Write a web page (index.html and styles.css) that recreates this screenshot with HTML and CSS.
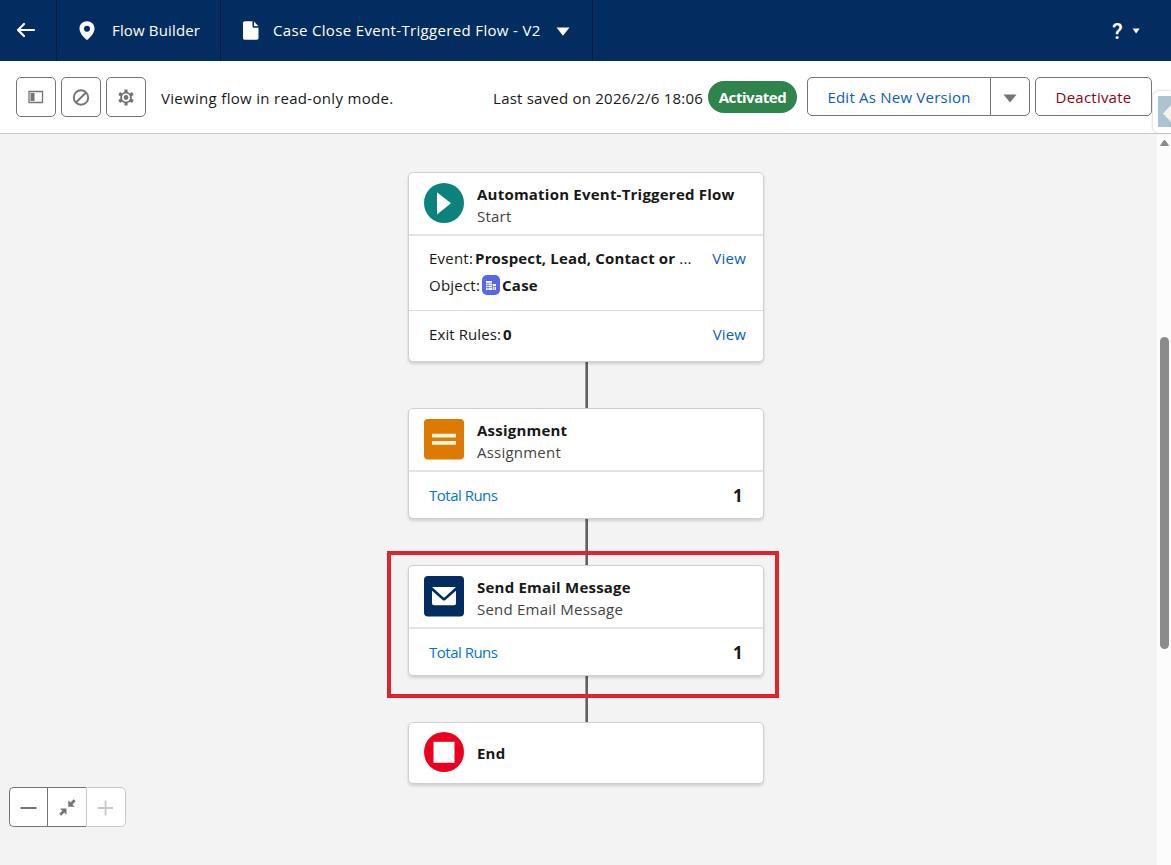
FILE: index.html
```html
<!DOCTYPE html>
<html lang="en">
<head>
<meta charset="utf-8">
<title>Flow Builder</title>
<link rel="stylesheet" href="styles.css">
</head>
<body>
<header class="topbar">
  <div class="back"><svg width="20" height="16" viewBox="0 0 20 16"><path d="M8 2 2 8l6 6M2.500 8H18" fill="none" stroke="#fff" stroke-width="2.200" stroke-linejoin="round" stroke-linecap="round"/></svg></div>
  <div class="app"><svg width="16" height="19" viewBox="0 0 16 19"><path fill="#fff" fill-rule="evenodd" d="M8 0.300C3.800 0.300.500 3.400.500 7.500c0 4.600 4.300 8.800 6.600 10.900.5.500 1.300.5 1.800 0 2.300-2.100 6.600-6.300 6.600-10.900C15.500 3.400 12.200.3 8 .3zM8 4.700a3 3 0 1 1 0 6 3 3 0 0 1 0-6z"/></svg><span>Flow Builder</span></div>
  <div class="flow-name"><svg width="17" height="19" viewBox="0 0 17 19"><path fill="#fff" d="M3 .3h7.500v4.900c0 .9.600 1.500 1.500 1.500h4.500V17c0 1-.7 1.700-1.700 1.700H2.700C1.700 18.700 1 18 1 17V2C1 1 1.700.3 3 .3zM12 .500 16.500 5.200h-4c-.3 0-.5-.2-.5-.5z"/></svg><span>Case Close Event-Triggered Flow - V2</span><svg class="caret" width="14" height="9" viewBox="0 0 14 9"><path fill="#fff" d="M.5.500h13L7 8.800z"/></svg></div>
  <div class="help"><span>?</span><svg width="8" height="6" viewBox="0 0 8 6"><path fill="#fff" d="M.5.500h7.200L4.100 5.500z"/></svg></div>
</header>
<div class="toolbar">
  <button class="icon-btn"><svg width="16" height="14" viewBox="0 0 16 14"><path d="M1 1.500h13.500v11H1z" fill="none" stroke="#747474" stroke-width="1.300"/><path d="M2.500 3h4v8h-4z" fill="#747474"/></svg></button>
  <button class="icon-btn"><svg width="18" height="18" viewBox="0 0 18 18"><circle cx="9" cy="9.500" r="7.200" fill="none" stroke="#747474" stroke-width="1.900"/><path d="m4 14.500 10-10" stroke="#747474" stroke-width="1.900"/></svg></button>
  <button class="icon-btn"><svg width="16" height="18" viewBox="0 0 16 18"><g stroke="#747474" stroke-width="3.200"><path d="M8 1.500v16M1.100 5.500l13.800 8M1.100 13.500 14.900 5.500"/></g><circle cx="8" cy="9.500" r="5.800" fill="#747474"/><circle cx="8" cy="9.500" r="3.200" fill="none" stroke="#fff" stroke-width="1.500"/></svg></button>
  <span class="readonly">Viewing flow in read-only mode.</span>
  <span class="saved">Last saved on 2026/2/6 18:06</span>
  <span class="badge">Activated</span>
  <div class="split"><button class="edit"><span>Edit As New Version</span></button><button class="more"><svg width="14" height="9" viewBox="0 0 14 9"><path fill="#747474" d="M.5.500h13L7 8.500z"/></svg></button></div>
  <button class="deactivate"><span>Deactivate</span></button>
  <div class="side-tab"><div class="side-tab-face"><svg width="13" height="31" viewBox="0 0 13 31"><path fill="#f3f3ef" d="M5 17.500 13 9v17z"/></svg></div></div>
</div>
<main class="workspace">
  <section class="canvas">
    <article class="card start">
      <div class="head"><svg width="40" height="40" viewBox="0 0 40 40"><circle cx="20" cy="20" r="20" fill="#0b827c"/><path d="M13 9.300 27 20.300 13 31.500z" fill="#fff"/></svg><div class="names"><b>Automation Event-Triggered Flow</b><span>Start</span></div></div>
      <div class="details">
        <div class="row"><span>Event:</span><b class="event">Prospect, Lead, Contact or <i>...</i></b><a>View</a></div>
        <div class="row"><span>Object:</span><svg class="obj" width="18" height="20" viewBox="0 0 18 20"><rect width="18" height="20" rx="5" fill="#5867e8"/><path fill="#fff" d="M4 6h6v3h4v6H4z"/><path stroke="#5867e8" stroke-width=".7" d="M4 8.200h6M4 10.400h6M4 12.600h6M6 8v7M10.500 9v6M10.500 11.500H14M12.300 11v4"/></svg><b>Case</b></div>
      </div>
      <div class="exit row"><span>Exit Rules:</span><b>0</b><a>View</a></div>
    </article>
    <div class="line"></div>
    <article class="card">
      <div class="head"><svg width="40" height="41" viewBox="0 0 40 41"><rect width="40" height="40.500" rx="4" fill="#dd7a01"/><path fill="#fff4dc" d="M8 14.800h24v3.700H8zM8 22h24v3.700H8z"/></svg><div class="names"><b>Assignment</b><span>Assignment</span></div></div>
      <div class="runs"><span>Total Runs</span><b>1</b></div>
    </article>
    <div class="line"></div>
    <article class="card email">
      <div class="head"><svg width="40" height="41" viewBox="0 0 40 41"><rect width="40" height="40.500" rx="4" fill="#032d60"/><path fill="#fff" d="M8 11h24L20.700 21.300c-.4.400-1 .4-1.400 0zM8 14.700l10.600 9.200c.8.700 2 .7 2.800 0L32 14.700v12.500c0 1.200-.8 2-2 2H10c-1.200 0-2-.8-2-2z"/></svg><div class="names"><b>Send Email Message</b><span>Send Email Message</span></div></div>
      <div class="runs"><span>Total Runs</span><b>1</b></div>
      <div class="highlight"></div>
    </article>
    <div class="line"></div>
    <article class="card end">
      <svg width="40" height="40" viewBox="0 0 40 40"><circle cx="20" cy="20" r="20" fill="#ea001e"/><path d="M9.500 9.800h21v21h-21z" fill="#fff"/></svg><b>End</b>
    </article>
    <div class="zoom">
      <button><svg width="17" height="17" viewBox="0 0 17 17"><path d="M.5 9h16" stroke="#747474" stroke-width="2"/></svg></button>
      <button><svg width="18" height="18" viewBox="0 0 18 18"><path fill="#747474" d="M10.300 2.300v6.400h6.400l-2.200-2.200 3.200-3.200-2-2L12.500 4.500zM8.500 10.500H2.100l2.200 2.200L1.300 15.800l1.900 1.900L6.300 14.500 8.500 16.700z"/></svg></button>
      <button class="disabled"><svg width="17" height="17" viewBox="0 0 17 17"><path d="M1 9h15M8.500 1.500v15" stroke="#c9c9c9" stroke-width="1.800"/></svg></button>
    </div>
  </section>
  <aside class="scrollbar"><svg width="10" height="8" viewBox="0 0 10 8"><path d="M4.500 1 8.500 6.500h-8z" fill="#8b8b8b" stroke="#8b8b8b" stroke-linejoin="round"/></svg><div class="thumb"></div></aside>
</main>
</body>
</html>
```
FILE: styles.css
```css
* { box-sizing: border-box; }
body { margin: 0; width: 1171px; height: 865px; overflow: hidden; display: flex; flex-direction: column; background: #fff; color: #181818; font: 15px/22px "Open Sans", "Noto Sans", sans-serif; letter-spacing: .22px; }
svg { display: block; flex: none; }
span, b, a { white-space: nowrap; }
button { margin: 0; padding: 0; font: inherit; letter-spacing: inherit; background: #fff; border: 1px solid #747474; display: flex; align-items: center; justify-content: center; }

.topbar { height: 61px; flex: none; display: flex; background: #032d60; color: #fff; }
.topbar > div { display: flex; align-items: center; }
.topbar span { margin-top: -2px; }
.topbar .back { width: 57px; padding: 0 0 1px 16px; border-right: 1px solid #041a3d; }
.app { width: 164px; padding-left: 22px; gap: 17px; border-right: 1px solid #041a3d; letter-spacing: .15px; }
.flow-name { width: 372px; padding-left: 21px; gap: 14px; border-right: 1px solid #041a3d; letter-spacing: .34px; }
.flow-name .caret { margin: 2px 0 0 1px; }
.help { margin-left: auto; padding-right: 31px; gap: 9px; }
.topbar .help span { font: 500 22px/22px Roboto, sans-serif; margin-top: 3px; }

.toolbar { height: 73px; flex: none; display: flex; align-items: flex-start; padding: 16px 0 0 16px; border-bottom: 1px solid #c9c9c9; position: relative; }
.icon-btn { width: 40px; height: 40px; border-radius: 5px; margin-right: 5px; }
.readonly { margin: 10px 0 0 10px; letter-spacing: .31px; }
.saved { margin: 10px 0 0 auto; }
.badge { width: 89px; height: 32px; margin: 4px 10px 0 5px; border-radius: 16px; background: #2e844a; color: #fff; font-weight: 700; line-height: 33px; text-align: center; letter-spacing: -.45px; }
.split { display: flex; margin-right: 5px; }
.edit { width: 184px; height: 39px; border-radius: 5px 0 0 5px; color: #0b5cc4; }
.more { width: 40px; height: 39px; margin-left: -1px; border-radius: 0 5px 5px 0; padding-top: 3px; }
.deactivate { width: 117px; height: 39px; margin-right: 19px; border-radius: 5px; color: #8e031c; }
.side-tab { position: absolute; right: 0; top: 30px; width: 18px; height: 42px; padding: 5px 0 0 5px; background: #fff; border-radius: 6px 0 0 6px; box-shadow: 0 0 3px #bbb; }
.side-tab-face { background: #a9c5d2; width: 13px; height: 31px; }

.workspace { flex: 1; display: flex; }
.canvas { flex: 1; position: relative; background: #f3f3f3; padding: 37.500px 0 0 408px; }
.card { width: 356px; height: 111px; border: 1px solid #d0d0d0; border-radius: 5px; background: #fff; box-shadow: 0 2px 3px rgba(0,0,0,.15); position: relative; }
.head { height: 63px; padding: 10px 0 0 15px; display: flex; border-bottom: 2px solid #e3e3e3; }
.names { margin-left: 13px; display: flex; flex-direction: column; }
.names span { color: #444; }
.start { height: 190px; }
.details { height: 75px; padding-top: 9px; border-bottom: 1px solid #ddd; }
.row { display: flex; align-items: center; padding: 0 17px 0 20px; height: 27px; }
.row a { margin-left: auto; color: #0b5cc4; }
.row b { margin-left: 2px; }
.row .event { letter-spacing: .15px; }
.row i { font-style: normal; font-weight: 400; }
.row .obj { margin-left: 2px; }
.exit { height: 47px; letter-spacing: .1px; }
.line { width: 3px; height: 46px; margin-left: 177px; background: #606060; border-left: 1px solid #999; }
.runs { height: 46px; display: flex; align-items: center; justify-content: space-between; padding: 1px 20px 0 20px; }
.runs span { color: #0176d3; letter-spacing: -.5px; }
.runs b { font-size: 17px; padding-top: 2px; }
.highlight { position: absolute; left: -22px; top: -15px; width: 392px; height: 147px; border: 4px solid #e2222d; }
.end { height: 62px; display: flex; align-items: center; padding: 0 0 1px 15px; }
.end b { margin: 2px 0 0 13px; }
.zoom { position: absolute; left: 9px; top: 653px; display: flex; }
.zoom button { width: 39px; height: 40px; border-right: 0; }
.zoom button:first-child { width: 38px; border-radius: 5px 0 0 5px; }
.zoom button.disabled { width: 40px; padding-right: 2px; border: 1px solid #c9c9c9; border-radius: 0 5px 5px 0; }
.scrollbar { width: 14px; background: #fcfcfc; padding: 5px 0 0 3px; }
.thumb { width: 9px; height: 312px; margin-top: 190px; border-radius: 5px; background: #8b8b8b; }
```
